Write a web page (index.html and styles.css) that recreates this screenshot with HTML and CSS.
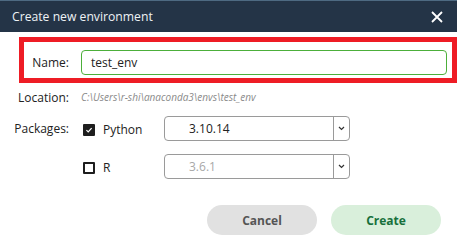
FILE: index.html
```html
<!DOCTYPE html>
<html lang="en">
<head>
  <meta charset="UTF-8" />
  <title>Create new environment</title>
  <link rel="stylesheet" href="styles.css">
</head>
<body>
  <div class="dialog">
    <div class="titlebar">
      <span class="title">Create new environment</span>
      <svg class="close" width="12" height="12" viewBox="0 0 12 12">
        <path d="M1 1 L11 11 M11 1 L1 11" stroke="#fff" stroke-width="1.8" fill="none"/>
      </svg>
    </div>

    <div class="content">
      <div class="row name-row">
        <label class="label">Name:</label>
        <div class="text-input">test_env</div>
      </div>

      <div class="row location-row">
        <span class="label">Location:</span>
        <span class="path">C:\Users\r-shi\anaconda3\envs\test_env</span>
      </div>

      <div class="row pkg-row">
        <span class="label">Packages:</span>
        <div class="pkg">
          <span class="checkbox checked">
            <svg width="10" height="10" viewBox="0 0 10 10"><path d="M1.8 5.2 L4 7.3 L8.3 2.6" stroke="#fff" stroke-width="1.6" fill="none"/></svg>
          </span>
          <span class="pkg-name">Python</span>
        </div>
        <div class="select">
          <span class="select-value">3.10.14</span>
          <span class="select-arrow"><svg width="7" height="5" viewBox="0 0 7 5"><path d="M1 1 L3.5 3.5 L6 1" stroke="#333" stroke-width="1.2" fill="none"/></svg></span>
        </div>
      </div>

      <div class="row pkg-row second">
        <span class="label"></span>
        <div class="pkg">
          <span class="checkbox"></span>
          <span class="pkg-name">R</span>
        </div>
        <div class="select">
          <span class="select-value disabled">3.6.1</span>
          <span class="select-arrow"><svg width="7" height="5" viewBox="0 0 7 5"><path d="M1 1 L3.5 3.5 L6 1" stroke="#333" stroke-width="1.2" fill="none"/></svg></span>
        </div>
      </div>

      <div class="buttons">
        <button class="btn cancel">Cancel</button>
        <button class="btn create">Create</button>
      </div>
    </div>
  </div>
</body>
</html>
```

FILE: styles.css
```css
body {
  margin: 0;
  font-family: 'Open Sans', sans-serif;
  background: #fff;
  color: #222;
}
.dialog {
  width: 457px;
  height: 250px;
  background: #fff;
}
.titlebar {
  height: 31px;
  border-top: 1px solid #4e6a82;
  background: #243447;
  display: flex;
  align-items: center;
  justify-content: space-between;
  padding: 0 14px 0 12px;
}
.title {
  color: #eef2f5;
  font-size: 12.2px;
}
.close { margin-top: 1px; }
.content { padding-top: 5px; }
.row {
  display: flex;
  align-items: center;
}
.label {
  width: 69px;
  text-align: right;
  font-size: 12px;
  flex-shrink: 0;
}
.name-row {
  margin-left: 19px;
  width: 423px;
  border: 5px solid #ee1c25;
  padding: 8px 5px 3px 0;
}
.name-row .label { width: 45px; }
.text-input {
  margin-left: 12px;
  flex: 1;
  height: 23px;
  border: 1px solid #4caf3a;
  border-radius: 4px;
  font-size: 12px;
  line-height: 23px;
  padding-left: 9px;
}
.location-row {
  margin-top: 7px;
  height: 14px;
}
.path {
  margin-left: 12px;
  font-size: 10px;
  font-style: italic;
  color: #8a8a8a;
}
.pkg-row {
  margin-top: 12px;
  height: 25px;
}
.pkg-row.second { margin-top: 13px; }
.pkg {
  width: 81px;
  margin-left: 14px;
  display: flex;
  align-items: center;
  align-self: stretch;
  padding-top: 2px;
  box-sizing: border-box;
}
.checkbox {
  width: 12px;
  height: 12px;
  box-sizing: border-box;
  border: 2px solid #1e1e1e;
  border-radius: 1px;
  display: flex;
  align-items: center;
  justify-content: center;
}
.checkbox.checked { background: #1e1e1e; }
.pkg-name {
  margin-left: 8px;
  font-size: 12px;
}
.select {
  width: 186px;
  height: 25px;
  box-sizing: border-box;
  border: 1px solid #9a9a9a;
  border-radius: 4px;
  display: flex;
}
.select-value {
  flex: 1;
  padding-left: 24px;
  font-size: 12px;
  line-height: 23px;
}
.select-value.disabled { color: #a8a8a8; }
.select-arrow {
  width: 15px;
  border-left: 1px solid #9a9a9a;
  display: flex;
  align-items: center;
  justify-content: center;
}
.buttons {
  display: flex;
  justify-content: flex-end;
  gap: 14px;
  margin-top: 26px;
  padding-right: 16px;
}
.btn {
  width: 110px;
  height: 30px;
  border: none;
  border-radius: 15px;
  font-family: 'Open Sans', sans-serif;
  font-size: 12px;
  font-weight: bold;
  cursor: pointer;
}
.cancel { background: #e1e1e1; color: #555; }
.create { background: #d9efdb; color: #17703b; }
```
